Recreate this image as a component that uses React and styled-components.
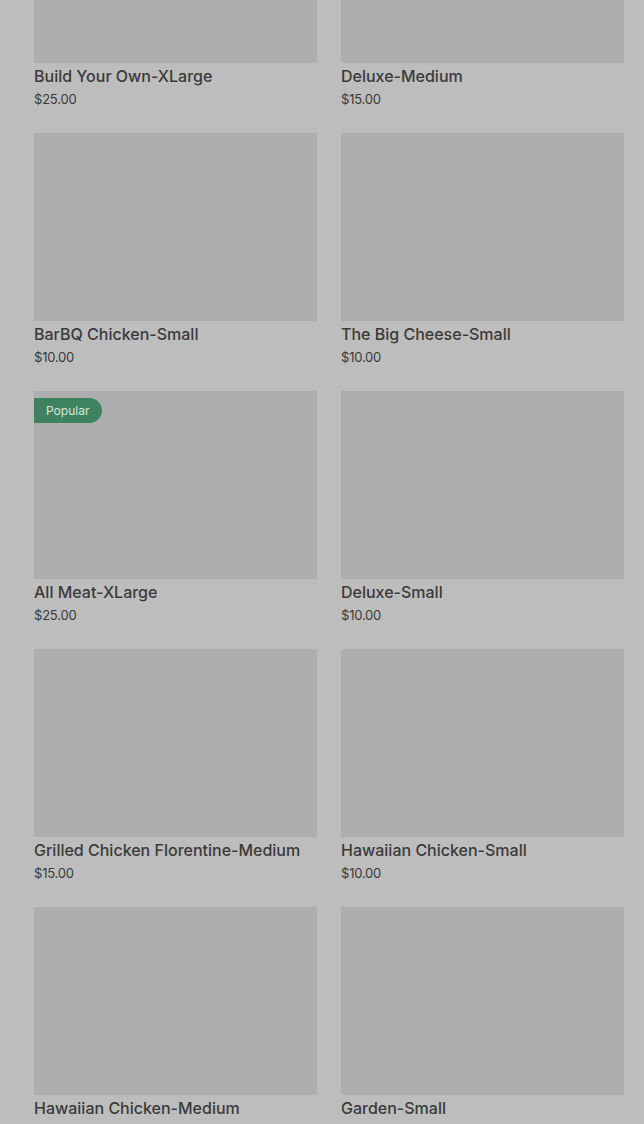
import React from "react";
import styled, { createGlobalStyle } from "styled-components";

const Global = createGlobalStyle`
  html, body { margin: 0; padding: 0; background: #bdbdbd; overflow: hidden; }
  body { font-family: Inter, "Noto Sans", sans-serif; }
`;

const Page = styled.div`
  width: 644px;
  height: 1124px;
  overflow: hidden;
  background: #bdbdbd;
`;

const Grid = styled.div`
  display: grid;
  grid-template-columns: 283px 283px;
  column-gap: 24px;
  row-gap: 23px;
  padding: 0 20px 0 34px;
  margin-top: -125px;
`;

const Card = styled.div`
  display: flex;
  flex-direction: column;
`;

const Thumb = styled.div`
  position: relative;
  height: 188px;
  background: #aeaeae;
`;

const Badge = styled.span`
  position: absolute;
  top: 7px;
  left: 0;
  height: 25px;
  padding: 0 13px 0 12px;
  display: flex;
  align-items: center;
  background: #3e8360;
  color: #d7e6dc;
  font-size: 12px;
  border-radius: 0 13px 13px 0;
`;

const Title = styled.div`
  margin-top: 1px;
  font-size: 16px;
  line-height: 24px;
  font-weight: 500;
  color: #3a3a3a;
  white-space: nowrap;
`;

const Price = styled.div`
  font-size: 13px;
  line-height: 22px;
  letter-spacing: -0.2px;
  color: #3a3a3a;
`;

const items = [
  ["Build Your Own-XLarge", "$25.00"],
  ["Deluxe-Medium", "$15.00"],
  ["BarBQ Chicken-Small", "$10.00"],
  ["The Big Cheese-Small", "$10.00"],
  ["All Meat-XLarge", "$25.00", true],
  ["Deluxe-Small", "$10.00"],
  ["Grilled Chicken Florentine-Medium", "$15.00"],
  ["Hawaiian Chicken-Small", "$10.00"],
  ["Hawaiian Chicken-Medium", "$15.00"],
  ["Garden-Small", "$10.00"],
];

export default function App() {
  return (
    <Page>
      <Global />
      <Grid>
        {items.map(([name, price, popular]) => (
          <Card key={name}>
            <Thumb>{popular && <Badge>Popular</Badge>}</Thumb>
            <Title>{name}</Title>
            <Price>{price}</Price>
          </Card>
        ))}
      </Grid>
    </Page>
  );
}
